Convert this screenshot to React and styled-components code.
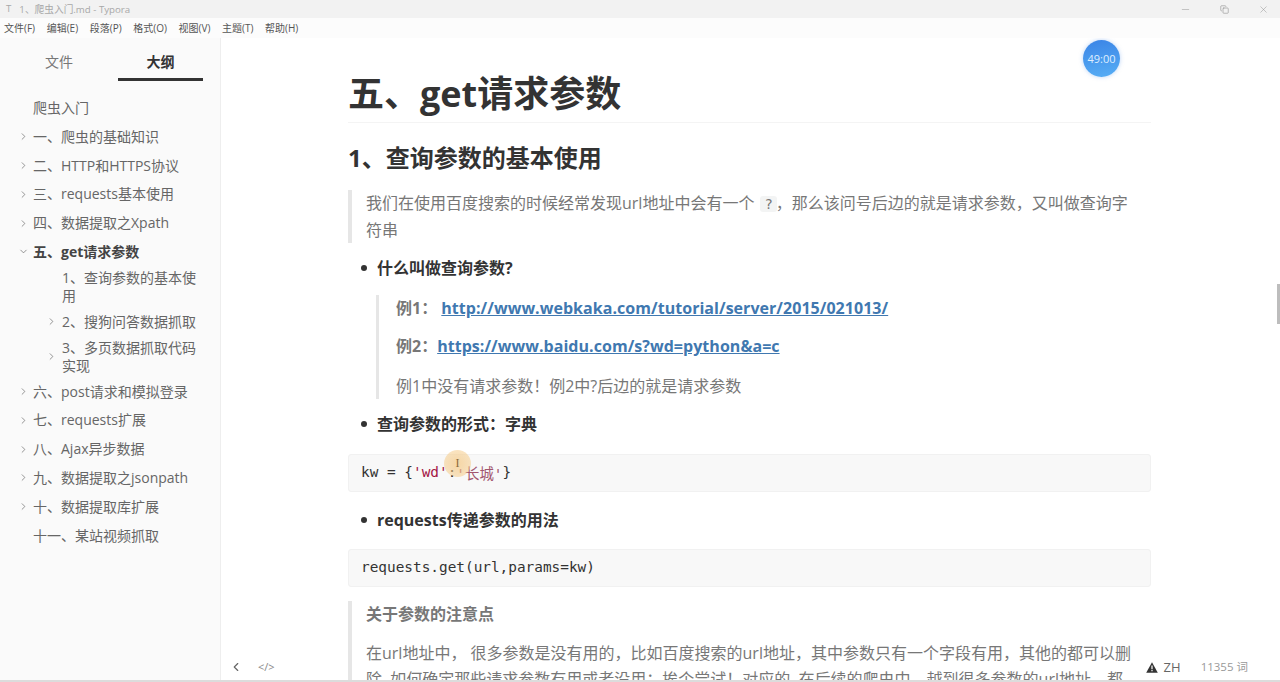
import styled, { createGlobalStyle } from "styled-components";
import { ChevronDown, ChevronLeft, ChevronRight, Copy, Minus, X } from "lucide-react";

const cjk = `"Open Sans", "Noto Sans CJK SC", sans-serif`;
const mono = `"DejaVu Sans Mono", "Noto Sans CJK SC", monospace`;

const GlobalStyle = createGlobalStyle`
  html, body {
    margin: 0;
    height: 100%;
    overflow: hidden;
    background: #fff;
  }
  body {
    font-family: ${cjk};
  }
  #root {
    height: 100%;
  }
`;

const Window = styled.div`
  position: relative;
  display: flex;
  flex-direction: column;
  width: 1280px;
  height: 682px;
  overflow: hidden;
  background: #fff;
  border-bottom: 2px solid #dcdcdc;
  box-sizing: border-box;
`;
const TitleBar = styled.div`
  display: flex;
  align-items: center;
  justify-content: space-between;
  height: 18px;
  padding-left: 6px;
  background: #f2f2f2;
  color: #a8a8a8;
  font-size: 9.7px;
`;
const TitleText = styled.span`
  display: flex;
  gap: 8px;
`;
const WindowButtons = styled.div`
  display: flex;
  align-items: center;
  gap: 29px;
  padding-right: 11px;
  color: #8a8a8a;
`;
const MenuBar = styled.div`
  display: flex;
  gap: 11.6px;
  height: 20px;
  align-items: center;
  padding-left: 4px;
  padding-bottom: 2px;
  box-sizing: border-box;
  background: #fcfcfc;
  color: #555;
  font-size: 10px;
`;
const Body = styled.div`
  display: flex;
  flex: 1;
  min-height: 0;
`;
const Sidebar = styled.aside`
  flex: none;
  width: 220px;
  background: #fafafa;
  border-right: 1px solid #eee;
`;
const Tabs = styled.div`
  display: grid;
  grid-template-columns: 118px 85px;
  height: 43px;
`;
const Tab = styled.div`
  display: flex;
  justify-content: center;
  padding-top: 13px;
  box-sizing: border-box;
  font-size: 14px;
  font-weight: ${(p) => (p.$active ? 700 : 400)};
  color: ${(p) => (p.$active ? "#333" : "#777")};
  border-bottom: ${(p) => (p.$active ? "3px solid #333" : "3px solid transparent")};
`;
const Outline = styled.div`
  padding-top: 12.6px;
`;
const OutlineRow = styled.div`
  position: relative;
  display: flex;
  align-items: center;
  min-height: ${(p) => (p.$tall ? "41px" : "28.8px")};
  padding-left: ${(p) => (p.$sub ? "62px" : "33px")};
  padding-right: 20px;
  color: ${(p) => (p.$active ? "#444" : "#666")};
  font-size: 14px;
  line-height: 18px;
  font-weight: ${(p) => (p.$active ? 700 : 400)};
`;
const Caret = styled.span`
  position: absolute;
  left: ${(p) => (p.$sub ? "46px" : "18px")};
  display: flex;
  color: #666;
`;

const Main = styled.main`
  position: relative;
  flex: 1;
  min-width: 0;
  overflow: hidden;
  padding: 28px 129px 0 127px;
  color: #333;
`;
const Heading = styled.h1`
  margin: 0;
  font-size: 36px;
  line-height: 56px;
  height: 56px;
  font-weight: 700;
  color: #333;
  border-bottom: 1px solid #f4f4f4;
`;
const SubHeading = styled.h2`
  margin: 17px 0 0;
  font-size: 24px;
  line-height: 36px;
  font-weight: 700;
  color: #333;
`;
const Quote = styled.blockquote`
  margin: ${(p) => p.$margin || "0"};
  padding: ${(p) => p.$padding || "0 15px 0 14px"};
  border-left: ${(p) => p.$border || "4px"} solid #e6e6e6;
  color: #777;
  font-size: 16px;
  line-height: 26px;
`;
const InlineCode = styled.code`
  font-family: ${mono};
  font-size: 14px;
  padding: 0 4px;
  margin: 0 -1px 0 6px;
  background: #f3f4f4;
  border-radius: 3px;
`;
const Bullet = styled.div`
  display: flex;
  align-items: center;
  gap: 10px;
  margin: ${(p) => p.$margin};
  padding-left: 13px;
  font-size: 16px;
  line-height: 26px;
  font-weight: 700;
  color: #333;
  &::before {
    content: "";
    width: 6px;
    height: 6px;
    border-radius: 50%;
    background: #333;
  }
`;
const QuoteLine = styled.p`
  margin: ${(p) => p.$margin || "0"};
  font-weight: ${(p) => (p.$bold ? 700 : 400)};
`;
const Link = styled.a`
  color: #4078b0;
  font-weight: 700;
  letter-spacing: 0.04px;
  text-decoration: underline;
`;
const CodeBlock = styled.pre`
  margin: ${(p) => p.$margin};
  height: 38px;
  padding: 0 0 2px 12px;
  box-sizing: border-box;
  display: flex;
  align-items: center;
  background: #f8f8f8;
  border: 1px solid #f1f1f1;
  border-radius: 3px;
  font-family: ${mono};
  font-size: 14.4px;
  color: #333;
`;
const Str = styled.span`
  color: ${(p) => (p.$soft ? "#a2566e" : "#a31545")};
`;
const Badge = styled.div`
  position: absolute;
  left: 862px;
  top: 2px;
  width: 37px;
  height: 37px;
  display: flex;
  align-items: center;
  justify-content: center;
  border-radius: 50%;
  background: linear-gradient(170deg, #3a84e6, #57aef5);
  box-shadow: 0 0 4px rgba(120, 170, 240, 0.5);
  color: #dfeeff;
  font-size: 11px;
`;
const CursorGlow = styled.div`
  position: absolute;
  left: 223px;
  top: 412px;
  width: 27px;
  height: 27px;
  border-radius: 50%;
  background: radial-gradient(circle, rgba(245, 200, 130, 0.7), rgba(245, 205, 140, 0.45));
  color: #8a6a3a;
  font-family: "Liberation Serif", serif;
  font-size: 12px;
  line-height: 26px;
  text-align: center;
`;
const ScrollThumb = styled.div`
  position: absolute;
  right: 0;
  top: 246px;
  width: 3px;
  height: 40px;
  background: #bdbdbd;
`;
const FootLeft = styled.div`
  position: absolute;
  left: 8px;
  bottom: 6px;
  display: flex;
  align-items: center;
  gap: 15px;
  color: #666;
  font-size: 11px;
`;
const CodeToggle = styled.span`
  color: #888;
`;
const FootRight = styled.div`
  position: absolute;
  right: 32px;
  bottom: 5px;
  display: flex;
  align-items: center;
  line-height: 16px;
`;
const Lang = styled.span`
  display: flex;
  align-items: center;
  gap: 6px;
  margin-right: 20px;
  color: #666;
  font-size: 13px;
`;
const WordCount = styled.span`
  color: #999;
  font-size: 11.5px;
`;

const WarnIcon = () => (
  <svg width="12" height="11" viewBox="0 0 12 11">
    <path d="M6 0.3L11.8 10.7H0.2Z" fill="#333" />
    <path d="M6 3.6V7.2M6 8V9.2" stroke="#fff" strokeWidth="1.2" />
  </svg>
);

const outline = [
  { text: "爬虫入门" },
  { text: "一、爬虫的基础知识", caret: "right" },
  { text: "二、HTTP和HTTPS协议", caret: "right" },
  { text: "三、requests基本使用", caret: "right" },
  { text: "四、数据提取之Xpath", caret: "right" },
  { text: "五、get请求参数", caret: "down", active: true },
  { text: "1、查询参数的基本使用", sub: true, tall: true },
  { text: "2、搜狗问答数据抓取", sub: true, caret: "right" },
  { text: "3、多页数据抓取代码实现", sub: true, caret: "right", tall: true },
  { text: "六、post请求和模拟登录", caret: "right" },
  { text: "七、requests扩展", caret: "right" },
  { text: "八、Ajax异步数据", caret: "right" },
  { text: "九、数据提取之jsonpath", caret: "right" },
  { text: "十、数据提取库扩展", caret: "right" },
  { text: "十一、某站视频抓取" },
];

const App = () => {
  return (
    <Window>
      <GlobalStyle />
      <TitleBar>
        <TitleText>
          <span>T</span>
          <span>1、爬虫入门.md - Typora</span>
        </TitleText>
        <WindowButtons>
          <Minus size={11} strokeWidth={1} />
          <Copy size={9} strokeWidth={1.5} />
          <X size={11} strokeWidth={1} />
        </WindowButtons>
      </TitleBar>
      <MenuBar>
        {["文件(F)", "编辑(E)", "段落(P)", "格式(O)", "视图(V)", "主题(T)", "帮助(H)"].map((m) => (
          <span key={m}>{m}</span>
        ))}
      </MenuBar>
      <Body>
        <Sidebar>
          <Tabs>
            <Tab>文件</Tab>
            <Tab $active>大纲</Tab>
          </Tabs>
          <Outline>
            {outline.map((o) => (
              <OutlineRow key={o.text} $sub={o.sub} $tall={o.tall} $active={o.active}>
                {o.caret && (
                  <Caret $sub={o.sub}>
                    {o.caret === "down" ? (
                      <ChevronDown size={11} strokeWidth={1.5} />
                    ) : (
                      <ChevronRight size={11} strokeWidth={1.5} />
                    )}
                  </Caret>
                )}
                <span>{o.text}</span>
              </OutlineRow>
            ))}
          </Outline>
        </Sidebar>
        <Main>
          <Heading>五、get请求参数</Heading>
          <SubHeading>1、查询参数的基本使用</SubHeading>
          <Quote $margin="14px 0 0">
            我们在使用百度搜索的时候经常发现url地址中会有一个<InlineCode>?</InlineCode>，那么该问号后边的就是请求参数，又叫做查询字符串
          </Quote>
          <Bullet $margin="12px 0 0">什么叫做查询参数?</Bullet>
          <Quote $margin="14px 0 0 28px" $padding="0 0 0 17px" $border="3px">
            <QuoteLine $bold>
              例1： <Link>http://www.webkaka.com/tutorial/server/2015/021013/</Link>
            </QuoteLine>
            <QuoteLine $bold $margin="12px 0 0">
              例2：<Link>https://www.baidu.com/s?wd=python&amp;a=c</Link>
            </QuoteLine>
            <QuoteLine $margin="14px 0 0">例1中没有请求参数！例2中?后边的就是请求参数</QuoteLine>
          </Quote>
          <Bullet $margin="12px 0 0">查询参数的形式：字典</Bullet>
          <CodeBlock $margin="17px 0 0">
            kw = {"{"}
            <Str>'wd'</Str>:<Str $soft>'长城'</Str>
            {"}"}
          </CodeBlock>
          <Bullet $margin="15px 0 0">requests传递参数的用法</Bullet>
          <CodeBlock $margin="16px 0 0">requests.get(url,params=kw)</CodeBlock>
          <Quote $margin="14px 0 0">
            <QuoteLine $bold>关于参数的注意点</QuoteLine>
            <QuoteLine $margin="13px 0 0">
              在url地址中， 很多参数是没有用的，比如百度搜索的url地址，其中参数只有一个字段有用，其他的都可以删除, 如何确定那些请求参数有用或者没用：挨个尝试！对应的, 在后续的爬虫中，越到很多参数的url地址，都可以尝试
            </QuoteLine>
          </Quote>
          <Badge>49:00</Badge>
          <CursorGlow>I</CursorGlow>
          <ScrollThumb />
          <FootLeft>
            <ChevronLeft size={14} strokeWidth={2} />
            <CodeToggle>&lt;/&gt;</CodeToggle>
          </FootLeft>
          <FootRight>
            <Lang>
              <WarnIcon />
              ZH
            </Lang>
            <WordCount>11355 词</WordCount>
          </FootRight>
        </Main>
      </Body>
    </Window>
  );
};

export default App;
